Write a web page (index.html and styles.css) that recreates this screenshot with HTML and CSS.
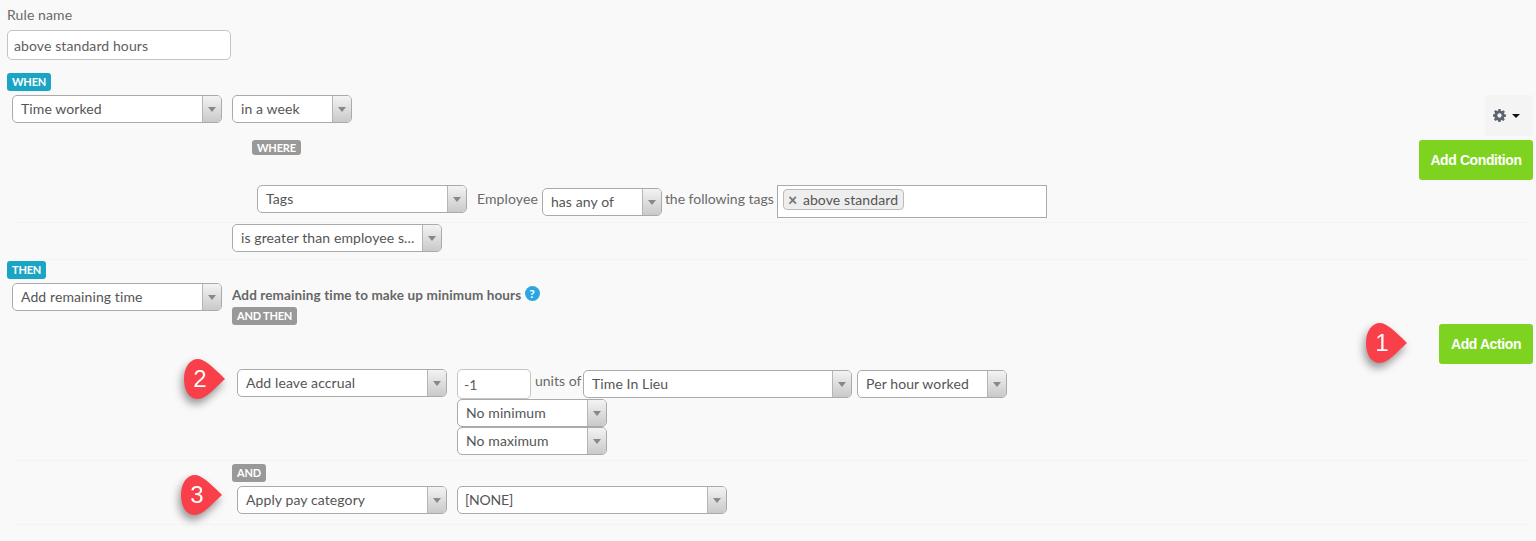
FILE: index.html
```html
<!DOCTYPE html>
<html lang="en">
<head>
<meta charset="utf-8">
<title>Rule</title>
<link rel="stylesheet" href="styles.css">
</head>
<body>
<div class="name-field">
  <label class="field-label" for="rule-name">Rule name</label>
  <input class="text-input rule-input" id="rule-name" value="above standard hours">
</div>

<section class="block when-block">
  <div class="block-main">
    <span class="badge badge-blue">WHEN</span>
    <div class="row when-row">
      <div class="sel w210"><span class="sel-text">Time worked</span><span class="sel-arrow"></span></div>
      <div class="sel w120"><span class="sel-text">in a week</span><span class="sel-arrow"></span></div>
    </div>
    <span class="badge badge-grey where-badge">WHERE</span>
    <div class="row tags-row">
      <div class="sel w210"><span class="sel-text">Tags</span><span class="sel-arrow"></span></div>
      <span class="inline-text employee">Employee</span>
      <div class="sel w120 any-sel"><span class="sel-text">has any of</span><span class="sel-arrow"></span></div>
      <span class="inline-text following">the following tags</span>
      <div class="tag-box"><span class="tag"><span class="tag-x">×</span>above standard</span></div>
    </div>
    <div class="rule-line line-a"></div>
    <div class="compare-row">
      <div class="sel w210"><span class="sel-text">is greater than employee s...</span><span class="sel-arrow"></span></div>
    </div>
    <div class="rule-line line-b"></div>
  </div>
  <div class="block-side when-side">
    <button class="gear-btn" type="button" aria-label="Settings">
      <svg class="gear" viewBox="0 0 24 24" width="13" height="13"><path fill="#5c6470" d="M10 0h4l.6 3.2 1.9.8 2.7-1.8 2.8 2.8-1.8 2.7.8 1.9 3 .6v4l-3.2.6-.8 1.9 1.8 2.7-2.8 2.8-2.7-1.8-1.9.8-.6 3h-4l-.6-3.2-1.9-.8-2.7 1.8-2.8-2.8 1.8-2.7-.8-1.9-3-.6v-4l3.2-.6.8-1.9-1.8-2.7 2.8-2.8 2.7 1.8 1.9-.8zM12 8a4 4 0 1 0 0 8 4 4 0 0 0 0-8z"/></svg>
      <span class="caret"></span>
    </button>
    <button class="add-btn condition-btn" type="button">Add Condition</button>
  </div>
</section>

<section class="block then-block">
  <div class="block-main">
    <span class="badge badge-blue">THEN</span>
    <div class="row then-row">
      <div class="sel w210"><span class="sel-text">Add remaining time</span><span class="sel-arrow"></span></div>
      <div class="then-info">
        <div class="then-desc">Add remaining time to make up minimum hours <span class="help">?</span></div>
        <span class="badge badge-grey">AND THEN</span>
      </div>
    </div>
    <div class="accrual-row">
      <div class="sel w210"><span class="sel-text">Add leave accrual</span><span class="sel-arrow"></span></div>
      <div class="accrual-fields">
        <div class="row units-line">
          <input class="text-input units-input" value="-1">
          <span class="inline-text units">units of</span>
          <div class="sel w269 units-sel"><span class="sel-text">Time In Lieu</span><span class="sel-arrow"></span></div>
          <div class="sel w150 units-sel"><span class="sel-text">Per hour worked</span><span class="sel-arrow"></span></div>
        </div>
        <div class="sel w150"><span class="sel-text">No minimum</span><span class="sel-arrow"></span></div>
        <div class="sel w150"><span class="sel-text">No maximum</span><span class="sel-arrow"></span></div>
      </div>
    </div>
    <div class="rule-line line-c"></div>
    <span class="badge badge-grey and-badge">AND</span>
    <div class="row pay-row">
      <div class="sel w210"><span class="sel-text">Apply pay category</span><span class="sel-arrow"></span></div>
      <div class="sel w270"><span class="sel-text none-text">[NONE]</span><span class="sel-arrow"></span></div>
    </div>
    <div class="rule-line line-d"></div>
  </div>
  <div class="block-side then-side">
    <button class="add-btn action-btn" type="button">Add Action</button>
  </div>
</section>

<div class="pin pin-1"><svg viewBox="0 0 42 41" width="42" height="41"><path fill="#f9404a" d="M14 0C20 0 27 6 41 20 30 30 22 40 14 40 5 40 0 32 0 20 0 8 6 0 14 0Z"/></svg><span class="pin-num">1</span></div>
<div class="pin pin-2"><svg viewBox="0 0 42 41" width="42" height="41"><path fill="#f9404a" d="M14 0C20 0 27 6 41 20 30 30 22 40 14 40 5 40 0 32 0 20 0 8 6 0 14 0Z"/></svg><span class="pin-num">2</span></div>
<div class="pin pin-3"><svg viewBox="0 0 42 41" width="42" height="41"><path fill="#f9404a" d="M14 0C20 0 27 6 41 20 30 30 22 40 14 40 5 40 0 32 0 20 0 8 6 0 14 0Z"/></svg><span class="pin-num">3</span></div>
</body>
</html>
```
FILE: styles.css
```css
* { box-sizing: border-box; }
html, body { height: 100%; }
body {
  margin: 0;
  position: relative;
  overflow: hidden;
  background: #f9f9f9;
  color: #5e5e5e;
  font-family: Lato, "Liberation Sans", sans-serif;
  font-size: 14px;
  letter-spacing: 0.1px;
}
.name-field { padding: 8px 0 0 7px; height: 73px; }
.field-label { display: block; height: 16px; line-height: 14px; font-size: 14px; color: #6a6a6a; }
.text-input {
  display: block;
  font: inherit;
  letter-spacing: inherit;
  color: #5e5e5e;
  background: #fff;
  border: 1px solid #c4c4c4;
  border-radius: 5px;
  padding: 0 6px;
  outline: none;
}
.rule-input { width: 224px; height: 30px; margin-top: 6px; }
.block { display: flex; justify-content: space-between; }
.block-main { flex: 1; min-width: 0; padding-left: 7px; }
.block-side { display: flex; flex-direction: column; align-items: flex-end; padding-right: 3px; }
.when-block { height: 188px; }
.then-block { height: 264px; }
.when-side { padding-top: 22px; }
.then-side { padding-top: 63px; }
.badge {
  display: block;
  width: fit-content;
  height: 18px;
  line-height: 18px;
  padding: 0 5px;
  border-radius: 3px;
  color: #fff;
  font-size: 11px;
  font-weight: 700;
  letter-spacing: -0.2px;
}
.badge-blue { background: #1ba5c4; }
.badge-grey { background: #999; }
.where-badge { height: 15px; line-height: 15px; margin: 17px 0 0 245px; }
.and-badge { margin: 3px 0 0 225px; }
.row { display: flex; }
.when-row { margin: 4px 0 0 5px; gap: 10px; }
.tags-row { margin: 30px 0 0 250px; height: 33px; }
.compare-row { margin: 1px 0 0 225px; }
.then-row { margin: 4px 0 0 5px; gap: 10px; }
.rule-line { width: 1514px; height: 1px; margin-left: 7px; background: #f4f4f4; }
.line-a { margin-top: 4px; }
.line-b { margin-top: 7px; }
.line-c { margin-top: 5px; }
.line-d { margin-top: 10px; }
.sel {
  display: flex;
  flex: none;
  height: 28px;
  background: #fff;
  border: 1px solid #aaa;
  border-radius: 5px;
  overflow: hidden;
  line-height: 26px;
}
.sel-text { flex: 1; min-width: 0; padding-left: 8px; white-space: nowrap; color: #555; }
.none-text { padding-left: 7px; letter-spacing: -0.2px; }
.sel-arrow {
  position: relative;
  flex: none;
  width: 19px;
  border-left: 1px solid #b5b5b5;
  background: linear-gradient(#f3f3f3, #c9c9c9);
}
.sel-arrow::after {
  content: "";
  position: absolute;
  left: 5px;
  top: 11px;
  border: 4px solid transparent;
  border-top: 5px solid #888;
  border-bottom: 0;
}
.w120 { width: 120px; }
.w150 { width: 150px; }
.w210 { width: 210px; }
.w269 { width: 269px; }
.w270 { width: 270px; }
.inline-text { line-height: 28px; white-space: nowrap; color: #6a6a6a; }
.employee { margin-left: 10px; }
.any-sel { margin: 3px 0 0 4px; }
.following { margin-left: 3px; letter-spacing: -0.02px; width: 109px; }
.tag-box {
  width: 270px;
  height: 33px;
  margin-left: 3px;
  padding: 3px 5px;
  background: #fff;
  border: 1px solid #aaa;
}
.tag {
  display: inline-flex;
  align-items: center;
  height: 21px;
  padding: 0 5px 0 4px;
  background: #eee;
  border: 1px solid #bbb;
  border-radius: 4px;
  color: #555;
}
.tag-x { width: 15px; font-weight: 900; font-size: 16px; color: #777; }
.then-info { margin-top: 3px; }
.then-desc { height: 21px; line-height: 19px; font-weight: 700; font-size: 13.5px; letter-spacing: 0.12px; white-space: nowrap; color: #666; }
.help {
  display: inline-block;
  width: 15px;
  height: 15px;
  border-radius: 50%;
  background: #2ba6e0;
  color: #fff;
  font-size: 12px;
  line-height: 15px;
  text-align: center;
  vertical-align: 2px;
}
.accrual-row { display: flex; margin: 44px 0 0 230px; gap: 10px; }
.units-input { width: 74px; height: 30px; padding: 0 6px; }
.units { width: 44px; margin: -2px 4px 0 4px; letter-spacing: 0; }
.units-sel { margin: 1px 0 0 0; }
.units-sel + .units-sel { margin-left: 5px; }
.add-btn {
  display: block;
  height: 40px;
  padding: 0;
  border: 0;
  border-radius: 3px;
  background: #7ed321;
  color: #fff;
  font-family: "Liberation Sans", Arial, sans-serif;
  font-size: 14px;
  font-weight: 700;
  letter-spacing: -0.4px;
}
.condition-btn { width: 114px; margin-top: 4px; }
.action-btn { width: 94px; }
.gear-btn {
  display: flex;
  align-items: center;
  justify-content: center;
  gap: 6px;
  width: 48px;
  height: 41px;
  padding: 0 6px 0 0;
  border: 0;
  border-radius: 3px;
  background: #f4f4f4;
}
.caret { border: 4px solid transparent; border-top-color: #111; border-bottom: 0; }
.pay-row { margin: 4px 0 0 230px; gap: 10px; }
.pin {
  position: absolute;
  width: 42px;
  height: 41px;
  filter: drop-shadow(-2px 5px 4px rgba(0,0,0,.4));
}
.pin svg { display: block; }
.pin-num {
  position: absolute;
  left: 0;
  top: 0;
  width: 32px;
  height: 41px;
  line-height: 40px;
  text-align: center;
  color: #fff;
  font-family: "Liberation Sans", Arial, sans-serif;
  font-size: 24px;
  letter-spacing: 0;
}
.pin-1 { left: 1366px; top: 323px; }
.pin-2 { left: 184px; top: 359px; }
.pin-3 { left: 181px; top: 475px; }
```
